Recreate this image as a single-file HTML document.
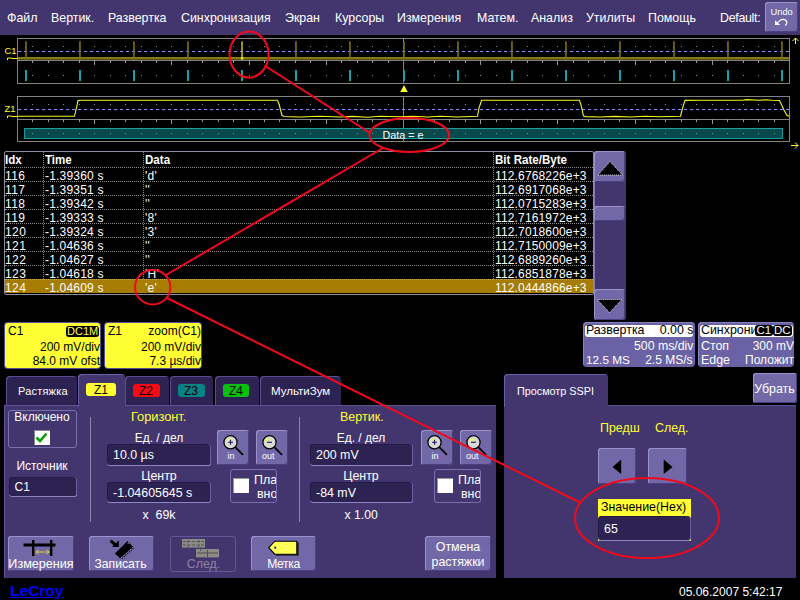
<!DOCTYPE html>
<html><head><meta charset="utf-8"><title>LeCroy</title>
<style>
html,body{margin:0;padding:0;background:#000;}
body{width:800px;height:600px;position:relative;overflow:hidden;font-family:"Liberation Sans",sans-serif;color:#fff;font-size:12.4px;}
.abs{position:absolute;}
.t{position:absolute;white-space:pre;line-height:14px;}
#menu{position:absolute;left:0;top:0;width:800px;height:35px;background:#43366f;}
#menu .t{top:11px;font-size:12.4px;}
.btn{position:absolute;background:#7268a8;border-radius:3px;box-shadow:inset 1px 1px 0 #9a92cc,inset -1px -1px 0 #4a3f80;}
.fld{position:absolute;background:#2d2353;border-radius:3px;box-shadow:inset 0 -1px 0 #8f86c4,inset -1px 0 0 #6a60a0,inset 1px 1px 0 #241b45;}
.pan{position:absolute;background:#43366f;}
.tab{position:absolute;background:#2d2353;border-radius:4px 4px 0 0;box-shadow:inset 1px 1px 0 #5a4e90;}
.y{color:#ffff33;}

#tbl .th{position:absolute;top:0;height:15px;line-height:16px;font-weight:bold;font-size:13px;white-space:pre;transform:scaleX(0.89);transform-origin:0 0;}
#tbl .tr{position:absolute;left:0;width:588px;height:14px;border-top:1px dotted #8a8a8a;box-sizing:border-box;font-size:12px;line-height:17px;white-space:pre;}
#tbl .tr.sel{background:#a67c02;border-top-color:#c8a848;}
#tbl .tr span{position:absolute;top:0;}
#tbl .c1{left:0px;letter-spacing:0.4px}
#tbl .c2{left:40px;letter-spacing:0.2px}
#tbl .c3{left:140px;letter-spacing:0.3px}
#tbl .c4{left:490px;letter-spacing:0.15px}
#tbl .vs{position:absolute;top:0;height:127px;width:0;border-left:1px dotted #8a8a8a;}

.desc{position:absolute;background:#ffff33;border-radius:3px;color:#000;overflow:hidden;box-shadow:0 0 0 1px #55509a;}
.desc .t{font-size:12px;}
.badge{background:#000;color:#ffff33;border-radius:3px;padding:0 1px;line-height:11px;font-size:11px!important;letter-spacing:-0.3px}
.tb{position:absolute;background:#6a62a4;border-radius:4px;overflow:hidden;box-shadow:inset 1px 1px 0 #8880bc;}
.tb .t{font-size:12px;}
.tb .ws{position:absolute;left:1.5px;top:2.5px;right:1.5px;height:12.5px;background:#fff;border-radius:3px}
.tb .k{color:#000}
.badge2{background:#000;color:#fff;border-radius:3px;padding:0 1.5px;line-height:11px;font-size:11.5px!important;}
.pill{position:absolute;top:8px;width:27px;height:13px;border-radius:3px;color:#000;font-size:12px;line-height:15px;text-align:center;}
.obox{position:absolute;box-sizing:border-box;border:1px solid #7a70b0;border-radius:3px;}
.c{text-align:center;}
</style></head><body>
<div id="menu">
<span class="t" style="left:7px">Файл</span>
<span class="t" style="left:51px">Вертик.</span>
<span class="t" style="left:108px">Развертка</span>
<span class="t" style="left:181px">Синхронизация</span>
<span class="t" style="left:285px">Экран</span>
<span class="t" style="left:335px">Курсоры</span>
<span class="t" style="left:397px">Измерения</span>
<span class="t" style="left:477px">Матем.</span>
<span class="t" style="left:531px">Анализ</span>
<span class="t" style="left:586px">Утилиты</span>
<span class="t" style="left:648px">Помощь</span>
<span class="t" style="left:720px;letter-spacing:-0.3px">Default:</span>
<div class="btn" style="left:765px;top:2px;width:33px;height:30px"></div>
<span class="t" style="left:770.5px;top:7px;font-size:9.3px;line-height:11px">Undo</span>
</div>
<!--WAVE-S--><svg class="abs" style="left:0;top:0" width="800" height="160" viewBox="0 0 800 160">
<rect x="17.5" y="38.5" width="772.0" height="45.0" fill="none" stroke="#828282" stroke-width="1"/>
<line x1="17.5" y1="60.5" x2="789.5" y2="60.5" stroke="#828282" stroke-width="1"/>
<line x1="403.5" y1="38.5" x2="403.5" y2="83.5" stroke="#828282" stroke-width="1"/>
<path d="M32.5 60.0v3 M48.5 60.0v3 M63.5 60.0v3 M79.5 60.0v3 M94.5 60.0v5 M110.5 60.0v3 M125.5 60.0v3 M141.5 60.0v3 M156.5 60.0v3 M171.5 60.0v5 M187.5 60.0v3 M202.5 60.0v3 M218.5 60.0v3 M233.5 60.0v3 M249.5 60.0v5 M264.5 60.0v3 M279.5 60.0v3 M295.5 60.0v3 M310.5 60.0v3 M326.5 60.0v5 M341.5 60.0v3 M357.5 60.0v3 M372.5 60.0v3 M388.5 60.0v3 M418.5 60.0v3 M434.5 60.0v3 M449.5 60.0v3 M465.5 60.0v3 M480.5 60.0v5 M496.5 60.0v3 M511.5 60.0v3 M527.5 60.0v3 M542.5 60.0v3 M557.5 60.0v5 M573.5 60.0v3 M588.5 60.0v3 M604.5 60.0v3 M619.5 60.0v3 M635.5 60.0v5 M650.5 60.0v3 M665.5 60.0v3 M681.5 60.0v3 M696.5 60.0v3 M712.5 60.0v5 M727.5 60.0v3 M743.5 60.0v3 M758.5 60.0v3 M774.5 60.0v3" stroke="#9a9a9a" stroke-width="1" fill="none"/>
<g fill="#909090"><rect x="32" y="46" width="1" height="1"/><rect x="48" y="46" width="1" height="1"/><rect x="63" y="46" width="1" height="1"/><rect x="79" y="46" width="1" height="1"/><rect x="94" y="46" width="1" height="1"/><rect x="110" y="46" width="1" height="1"/><rect x="125" y="46" width="1" height="1"/><rect x="141" y="46" width="1" height="1"/><rect x="156" y="46" width="1" height="1"/><rect x="171" y="46" width="1" height="1"/><rect x="187" y="46" width="1" height="1"/><rect x="202" y="46" width="1" height="1"/><rect x="218" y="46" width="1" height="1"/><rect x="233" y="46" width="1" height="1"/><rect x="249" y="46" width="1" height="1"/><rect x="264" y="46" width="1" height="1"/><rect x="279" y="46" width="1" height="1"/><rect x="295" y="46" width="1" height="1"/><rect x="310" y="46" width="1" height="1"/><rect x="326" y="46" width="1" height="1"/><rect x="341" y="46" width="1" height="1"/><rect x="357" y="46" width="1" height="1"/><rect x="372" y="46" width="1" height="1"/><rect x="388" y="46" width="1" height="1"/><rect x="403" y="46" width="1" height="1"/><rect x="418" y="46" width="1" height="1"/><rect x="434" y="46" width="1" height="1"/><rect x="449" y="46" width="1" height="1"/><rect x="465" y="46" width="1" height="1"/><rect x="480" y="46" width="1" height="1"/><rect x="496" y="46" width="1" height="1"/><rect x="511" y="46" width="1" height="1"/><rect x="527" y="46" width="1" height="1"/><rect x="542" y="46" width="1" height="1"/><rect x="557" y="46" width="1" height="1"/><rect x="573" y="46" width="1" height="1"/><rect x="588" y="46" width="1" height="1"/><rect x="604" y="46" width="1" height="1"/><rect x="619" y="46" width="1" height="1"/><rect x="635" y="46" width="1" height="1"/><rect x="650" y="46" width="1" height="1"/><rect x="665" y="46" width="1" height="1"/><rect x="681" y="46" width="1" height="1"/><rect x="696" y="46" width="1" height="1"/><rect x="712" y="46" width="1" height="1"/><rect x="727" y="46" width="1" height="1"/><rect x="743" y="46" width="1" height="1"/><rect x="758" y="46" width="1" height="1"/><rect x="774" y="46" width="1" height="1"/><rect x="32" y="75" width="1" height="1"/><rect x="48" y="75" width="1" height="1"/><rect x="63" y="75" width="1" height="1"/><rect x="79" y="75" width="1" height="1"/><rect x="94" y="75" width="1" height="1"/><rect x="110" y="75" width="1" height="1"/><rect x="125" y="75" width="1" height="1"/><rect x="141" y="75" width="1" height="1"/><rect x="156" y="75" width="1" height="1"/><rect x="171" y="75" width="1" height="1"/><rect x="187" y="75" width="1" height="1"/><rect x="202" y="75" width="1" height="1"/><rect x="218" y="75" width="1" height="1"/><rect x="233" y="75" width="1" height="1"/><rect x="249" y="75" width="1" height="1"/><rect x="264" y="75" width="1" height="1"/><rect x="279" y="75" width="1" height="1"/><rect x="295" y="75" width="1" height="1"/><rect x="310" y="75" width="1" height="1"/><rect x="326" y="75" width="1" height="1"/><rect x="341" y="75" width="1" height="1"/><rect x="357" y="75" width="1" height="1"/><rect x="372" y="75" width="1" height="1"/><rect x="388" y="75" width="1" height="1"/><rect x="403" y="75" width="1" height="1"/><rect x="418" y="75" width="1" height="1"/><rect x="434" y="75" width="1" height="1"/><rect x="449" y="75" width="1" height="1"/><rect x="465" y="75" width="1" height="1"/><rect x="480" y="75" width="1" height="1"/><rect x="496" y="75" width="1" height="1"/><rect x="511" y="75" width="1" height="1"/><rect x="527" y="75" width="1" height="1"/><rect x="542" y="75" width="1" height="1"/><rect x="557" y="75" width="1" height="1"/><rect x="573" y="75" width="1" height="1"/><rect x="588" y="75" width="1" height="1"/><rect x="604" y="75" width="1" height="1"/><rect x="619" y="75" width="1" height="1"/><rect x="635" y="75" width="1" height="1"/><rect x="650" y="75" width="1" height="1"/><rect x="665" y="75" width="1" height="1"/><rect x="681" y="75" width="1" height="1"/><rect x="696" y="75" width="1" height="1"/><rect x="712" y="75" width="1" height="1"/><rect x="727" y="75" width="1" height="1"/><rect x="743" y="75" width="1" height="1"/><rect x="758" y="75" width="1" height="1"/><rect x="774" y="75" width="1" height="1"/></g>
<rect x="17.5" y="96.5" width="772.0" height="45.0" fill="none" stroke="#828282" stroke-width="1"/>
<line x1="17.5" y1="119.5" x2="789.5" y2="119.5" stroke="#828282" stroke-width="1"/>
<line x1="403.5" y1="96.5" x2="403.5" y2="141.5" stroke="#828282" stroke-width="1"/>
<path d="M32.5 119.0v3 M48.5 119.0v3 M63.5 119.0v3 M79.5 119.0v3 M94.5 119.0v5 M110.5 119.0v3 M125.5 119.0v3 M141.5 119.0v3 M156.5 119.0v3 M171.5 119.0v5 M187.5 119.0v3 M202.5 119.0v3 M218.5 119.0v3 M233.5 119.0v3 M249.5 119.0v5 M264.5 119.0v3 M279.5 119.0v3 M295.5 119.0v3 M310.5 119.0v3 M326.5 119.0v5 M341.5 119.0v3 M357.5 119.0v3 M372.5 119.0v3 M388.5 119.0v3 M418.5 119.0v3 M434.5 119.0v3 M449.5 119.0v3 M465.5 119.0v3 M480.5 119.0v5 M496.5 119.0v3 M511.5 119.0v3 M527.5 119.0v3 M542.5 119.0v3 M557.5 119.0v5 M573.5 119.0v3 M588.5 119.0v3 M604.5 119.0v3 M619.5 119.0v3 M635.5 119.0v5 M650.5 119.0v3 M665.5 119.0v3 M681.5 119.0v3 M696.5 119.0v3 M712.5 119.0v5 M727.5 119.0v3 M743.5 119.0v3 M758.5 119.0v3 M774.5 119.0v3" stroke="#9a9a9a" stroke-width="1" fill="none"/>
<g fill="#909090"><rect x="32" y="104" width="1" height="1"/><rect x="48" y="104" width="1" height="1"/><rect x="63" y="104" width="1" height="1"/><rect x="79" y="104" width="1" height="1"/><rect x="94" y="104" width="1" height="1"/><rect x="110" y="104" width="1" height="1"/><rect x="125" y="104" width="1" height="1"/><rect x="141" y="104" width="1" height="1"/><rect x="156" y="104" width="1" height="1"/><rect x="171" y="104" width="1" height="1"/><rect x="187" y="104" width="1" height="1"/><rect x="202" y="104" width="1" height="1"/><rect x="218" y="104" width="1" height="1"/><rect x="233" y="104" width="1" height="1"/><rect x="249" y="104" width="1" height="1"/><rect x="264" y="104" width="1" height="1"/><rect x="279" y="104" width="1" height="1"/><rect x="295" y="104" width="1" height="1"/><rect x="310" y="104" width="1" height="1"/><rect x="326" y="104" width="1" height="1"/><rect x="341" y="104" width="1" height="1"/><rect x="357" y="104" width="1" height="1"/><rect x="372" y="104" width="1" height="1"/><rect x="388" y="104" width="1" height="1"/><rect x="403" y="104" width="1" height="1"/><rect x="418" y="104" width="1" height="1"/><rect x="434" y="104" width="1" height="1"/><rect x="449" y="104" width="1" height="1"/><rect x="465" y="104" width="1" height="1"/><rect x="480" y="104" width="1" height="1"/><rect x="496" y="104" width="1" height="1"/><rect x="511" y="104" width="1" height="1"/><rect x="527" y="104" width="1" height="1"/><rect x="542" y="104" width="1" height="1"/><rect x="557" y="104" width="1" height="1"/><rect x="573" y="104" width="1" height="1"/><rect x="588" y="104" width="1" height="1"/><rect x="604" y="104" width="1" height="1"/><rect x="619" y="104" width="1" height="1"/><rect x="635" y="104" width="1" height="1"/><rect x="650" y="104" width="1" height="1"/><rect x="665" y="104" width="1" height="1"/><rect x="681" y="104" width="1" height="1"/><rect x="696" y="104" width="1" height="1"/><rect x="712" y="104" width="1" height="1"/><rect x="727" y="104" width="1" height="1"/><rect x="743" y="104" width="1" height="1"/><rect x="758" y="104" width="1" height="1"/><rect x="774" y="104" width="1" height="1"/><rect x="32" y="133" width="1" height="1"/><rect x="48" y="133" width="1" height="1"/><rect x="63" y="133" width="1" height="1"/><rect x="79" y="133" width="1" height="1"/><rect x="94" y="133" width="1" height="1"/><rect x="110" y="133" width="1" height="1"/><rect x="125" y="133" width="1" height="1"/><rect x="141" y="133" width="1" height="1"/><rect x="156" y="133" width="1" height="1"/><rect x="171" y="133" width="1" height="1"/><rect x="187" y="133" width="1" height="1"/><rect x="202" y="133" width="1" height="1"/><rect x="218" y="133" width="1" height="1"/><rect x="233" y="133" width="1" height="1"/><rect x="249" y="133" width="1" height="1"/><rect x="264" y="133" width="1" height="1"/><rect x="279" y="133" width="1" height="1"/><rect x="295" y="133" width="1" height="1"/><rect x="310" y="133" width="1" height="1"/><rect x="326" y="133" width="1" height="1"/><rect x="341" y="133" width="1" height="1"/><rect x="357" y="133" width="1" height="1"/><rect x="372" y="133" width="1" height="1"/><rect x="388" y="133" width="1" height="1"/><rect x="403" y="133" width="1" height="1"/><rect x="418" y="133" width="1" height="1"/><rect x="434" y="133" width="1" height="1"/><rect x="449" y="133" width="1" height="1"/><rect x="465" y="133" width="1" height="1"/><rect x="480" y="133" width="1" height="1"/><rect x="496" y="133" width="1" height="1"/><rect x="511" y="133" width="1" height="1"/><rect x="527" y="133" width="1" height="1"/><rect x="542" y="133" width="1" height="1"/><rect x="557" y="133" width="1" height="1"/><rect x="573" y="133" width="1" height="1"/><rect x="588" y="133" width="1" height="1"/><rect x="604" y="133" width="1" height="1"/><rect x="619" y="133" width="1" height="1"/><rect x="635" y="133" width="1" height="1"/><rect x="650" y="133" width="1" height="1"/><rect x="665" y="133" width="1" height="1"/><rect x="681" y="133" width="1" height="1"/><rect x="696" y="133" width="1" height="1"/><rect x="712" y="133" width="1" height="1"/><rect x="727" y="133" width="1" height="1"/><rect x="743" y="133" width="1" height="1"/><rect x="758" y="133" width="1" height="1"/><rect x="774" y="133" width="1" height="1"/></g>
<line x1="18.0" y1="51.5" x2="789.5" y2="51.5" stroke="#8c8cff" stroke-width="1" stroke-dasharray="3.2 2.8"/>
<line x1="18.0" y1="109.5" x2="789.5" y2="109.5" stroke="#8c8cff" stroke-width="1" stroke-dasharray="3.2 2.8"/>
<rect x="17.5" y="57" width="772.0" height="2.6" fill="#847c10"/>
<g fill="#756e10"><rect x="25.1" y="41.3" width="1.7" height="18.5" /><rect x="79.1" y="41.3" width="1.7" height="18.5" /><rect x="133.1" y="41.3" width="1.7" height="18.5" /><rect x="187.1" y="41.3" width="1.7" height="18.5" /><rect x="295.1" y="41.3" width="1.7" height="18.5" /><rect x="349.1" y="41.3" width="1.7" height="18.5" /><rect x="403.1" y="41.3" width="1.7" height="18.5" /><rect x="457.1" y="41.3" width="1.7" height="18.5" /><rect x="511.1" y="41.3" width="1.7" height="18.5" /><rect x="565.1" y="41.3" width="1.7" height="18.5" /><rect x="619.1" y="41.3" width="1.7" height="18.5" /><rect x="673.1" y="41.3" width="1.7" height="18.5" /><rect x="727.1" y="41.3" width="1.7" height="18.5" /><rect x="781.1" y="41.3" width="1.7" height="18.5" /></g>
<rect x="241.1" y="41.3" width="1.8" height="18" fill="#aaa21a"/>
<rect x="240.8" y="57.3" width="2.6" height="2.2" fill="#f0e820"/>
<g fill="#12a4ac"><rect x="25" y="70" width="2" height="11" /><rect x="79" y="70" width="2" height="11" /><rect x="133" y="70" width="2" height="11" /><rect x="187" y="70" width="2" height="11" /><rect x="241" y="70" width="2" height="11" /><rect x="295" y="70" width="2" height="11" /><rect x="349" y="70" width="2" height="11" /><rect x="403" y="70" width="2" height="11" /><rect x="457" y="70" width="2" height="11" /><rect x="511" y="70" width="2" height="11" /><rect x="565" y="70" width="2" height="11" /><rect x="619" y="70" width="2" height="11" /><rect x="673" y="70" width="2" height="11" /><rect x="727" y="70" width="2" height="11" /><rect x="781" y="70" width="2" height="11" /></g>
<rect x="24.5" y="128.5" width="758" height="10" fill="#084a4c" stroke="#169c9e" stroke-width="1"/>
<g fill="#6f9a9a"><rect x="32" y="133" width="1" height="1"/><rect x="48" y="133" width="1" height="1"/><rect x="63" y="133" width="1" height="1"/><rect x="79" y="133" width="1" height="1"/><rect x="94" y="133" width="1" height="1"/><rect x="110" y="133" width="1" height="1"/><rect x="125" y="133" width="1" height="1"/><rect x="141" y="133" width="1" height="1"/><rect x="156" y="133" width="1" height="1"/><rect x="171" y="133" width="1" height="1"/><rect x="187" y="133" width="1" height="1"/><rect x="202" y="133" width="1" height="1"/><rect x="218" y="133" width="1" height="1"/><rect x="233" y="133" width="1" height="1"/><rect x="249" y="133" width="1" height="1"/><rect x="264" y="133" width="1" height="1"/><rect x="279" y="133" width="1" height="1"/><rect x="295" y="133" width="1" height="1"/><rect x="310" y="133" width="1" height="1"/><rect x="326" y="133" width="1" height="1"/><rect x="341" y="133" width="1" height="1"/><rect x="357" y="133" width="1" height="1"/><rect x="372" y="133" width="1" height="1"/><rect x="388" y="133" width="1" height="1"/><rect x="403" y="133" width="1" height="1"/><rect x="418" y="133" width="1" height="1"/><rect x="434" y="133" width="1" height="1"/><rect x="449" y="133" width="1" height="1"/><rect x="465" y="133" width="1" height="1"/><rect x="480" y="133" width="1" height="1"/><rect x="496" y="133" width="1" height="1"/><rect x="511" y="133" width="1" height="1"/><rect x="527" y="133" width="1" height="1"/><rect x="542" y="133" width="1" height="1"/><rect x="557" y="133" width="1" height="1"/><rect x="573" y="133" width="1" height="1"/><rect x="588" y="133" width="1" height="1"/><rect x="604" y="133" width="1" height="1"/><rect x="619" y="133" width="1" height="1"/><rect x="635" y="133" width="1" height="1"/><rect x="650" y="133" width="1" height="1"/><rect x="665" y="133" width="1" height="1"/><rect x="681" y="133" width="1" height="1"/><rect x="696" y="133" width="1" height="1"/><rect x="712" y="133" width="1" height="1"/><rect x="727" y="133" width="1" height="1"/><rect x="743" y="133" width="1" height="1"/><rect x="758" y="133" width="1" height="1"/><rect x="774" y="133" width="1" height="1"/></g>
<polyline fill="none" stroke="#f4f41c" stroke-width="1.1" points="17.5,116.3 74.5,116.3 76,110 78,100.6 80,100.3 277.5,100.3 279,104 282,115.5 284,116.5 300,117 320,116.3 340,117 352,116.4 368,117.2 380,116.3 400,116.8 413,116.2 428,117 440,116.3 458,117 470,116.5 477.5,116.3 479,108 481.5,100.4 483,100.2 579.5,100.2 581,105 583.5,116 586,116.6 600,117 615,116.4 630,117 645,116.3 660,116.8 680.5,116.2 682,110 685,100.4 700,100.2 743,100.2 746,99.6 760,100.2 766,99.7 772,100.3 779.5,100.5 784,110 787,115.5 789.5,116.3"/>
<polygon points="404,85 400.3,92 407.7,92" fill="#ffff30"/>
<text x="4.5" y="54" font-family="Liberation Sans, sans-serif" font-size="9.5" fill="#ffff30">C1</text>
<text x="4.5" y="112" font-family="Liberation Sans, sans-serif" font-size="9.5" fill="#ffff30">Z1</text>
<path d="M7.5 60v-2h3.5l1 0.5h5.5" stroke="#ffff30" fill="none" stroke-width="1"/>
<path d="M7.5 118v-2h3.5l1 0.5h5.5" stroke="#ffff30" fill="none" stroke-width="1"/>
<path d="M795.5 44v-6m-3 3l3-3l3 3" stroke="#ffff30" fill="none" stroke-width="1"/>
<path d="M791 145.5h7m-3-3l3 3l-3 3" stroke="#ffff30" fill="none" stroke-width="1"/>
<text x="382.5" y="138.6" font-family="Liberation Sans, sans-serif" font-size="10.8" fill="#fff">Data = e</text>
</svg><!--WAVE-E-->
<!--TABLE-S--><div id="tbl" class="abs" style="left:4px;top:151px;width:588px;height:142px;border:1px solid #8c8c9c;border-radius:2px;box-sizing:content-box;overflow:hidden">
<div class="th" style="left:0px">Idx</div><div class="th" style="left:40px">Time</div><div class="th" style="left:139.5px">Data</div><div class="th" style="left:490px">Bit Rate/Byte</div>
<div class="tr" style="top:15px"><span class="c1">116</span><span class="c2">-1.39360 s</span><span class="c3">'d'</span><span class="c4">112.6768226e+3</span></div>
<div class="tr" style="top:29px"><span class="c1">117</span><span class="c2">-1.39351 s</span><span class="c3">''</span><span class="c4">112.6917068e+3</span></div>
<div class="tr" style="top:43px"><span class="c1">118</span><span class="c2">-1.39342 s</span><span class="c3">''</span><span class="c4">112.0715283e+3</span></div>
<div class="tr" style="top:57px"><span class="c1">119</span><span class="c2">-1.39333 s</span><span class="c3">'8'</span><span class="c4">112.7161972e+3</span></div>
<div class="tr" style="top:71px"><span class="c1">120</span><span class="c2">-1.39324 s</span><span class="c3">'3'</span><span class="c4">112.7018600e+3</span></div>
<div class="tr" style="top:85px"><span class="c1">121</span><span class="c2">-1.04636 s</span><span class="c3">''</span><span class="c4">112.7150009e+3</span></div>
<div class="tr" style="top:99px"><span class="c1">122</span><span class="c2">-1.04627 s</span><span class="c3">''</span><span class="c4">112.6889260e+3</span></div>
<div class="tr" style="top:113px"><span class="c1">123</span><span class="c2">-1.04618 s</span><span class="c3">'H'</span><span class="c4">112.6851878e+3</span></div>
<div class="tr sel" style="top:127px"><span class="c1">124</span><span class="c2">-1.04609 s</span><span class="c3">'e'</span><span class="c4">112.0444866e+3</span></div>
<div class="vs" style="left:38px"></div>
<div class="vs" style="left:138px"></div>
<div class="vs" style="left:488px"></div>
</div>
<div class="abs" style="left:594px;top:151px;width:31.5px;height:169px;background:#43366f;border-radius:3px;box-shadow:inset 1px 0 0 #8078b8"></div>
<div class="btn" style="left:594px;top:151px;width:31px;height:31px"></div>
<div class="btn" style="left:594px;top:206px;width:31px;height:15px"></div>
<div class="btn" style="left:594px;top:289px;width:31px;height:31px"></div>
<svg class="abs" style="left:595px;top:151px" width="30" height="168"><polygon points="15,10.5 3,24 27.5,24" fill="#000" stroke="#e8e8e8" stroke-width="0.9" stroke-dasharray="1 1"/><polygon points="14.5,161.5 2.2,148.5 27,148.5" fill="#000" stroke="#e8e8e8" stroke-width="0.9" stroke-dasharray="1 1"/></svg><!--TABLE-E-->
<!--DESC-S--><!-- descriptor boxes -->
<div class="desc" style="left:5px;top:323px;width:95px;height:45px">
<span class="t" style="left:3px;top:1px">C1</span>
<span class="t badge" style="left:61px;top:3px;letter-spacing:0">DC1M</span>
<span class="t r" style="right:0;top:17px">200 mV/div</span>
<span class="t r" style="right:0;top:31px">84.0 mV ofst</span>
</div>
<div class="desc" style="left:105px;top:323px;width:96px;height:45px">
<span class="t" style="left:3px;top:1px">Z1</span>
<span class="t r" style="right:0;top:1px">zoom(C1)</span>
<span class="t r" style="right:0;top:17px">200 mV/div</span>
<span class="t r" style="right:0;top:31px">7.3 µs/div</span>
</div>
<!-- timebase / trigger -->
<div class="tb" style="left:583px;top:322px;width:111.5px;height:45px">
<div class="ws"></div>
<span class="t k" style="left:3px;top:1px;font-size:12.4px">Развертка</span>
<span class="t k" style="right:1px;top:1px;font-size:12.4px">0.00 s</span>
<span class="t" style="right:1px;top:17px;font-size:12.3px">500 ms/div</span>
<span class="t" style="left:3px;top:31px;font-size:11.8px">12.5 MS</span>
<span class="t" style="right:2px;top:31px">2.5 MS/s</span>
</div>
<div class="tb" style="left:698px;top:322px;width:96px;height:45px">
<div class="ws"></div>
<span class="t k" style="left:3px;top:1px;font-size:12.4px">Синхрони</span>
<span class="t badge2" style="left:57px;top:3px">C1</span>
<span class="t badge2" style="left:74.5px;top:3px">DC</span>
<span class="t" style="left:3px;top:17px;font-size:12.4px">Стоп</span>
<span class="t" style="right:0;top:17px">300 mV</span>
<span class="t" style="left:3px;top:31px;font-size:12.4px">Edge</span>
<span class="t" style="right:0;top:31px">Положит</span>
</div>
<!-- left panel -->
<div class="tab" style="left:6px;top:376px;width:71px;height:30px"><span class="t" style="left:12px;top:8px;font-size:11px;letter-spacing:0.2px">Растяжка</span></div>
<div class="tab" style="left:124.5px;top:376px;width:44px;height:30px"><span class="pill" style="left:8px;background:#f80a14">Z2</span></div>
<div class="tab" style="left:169.5px;top:376px;width:43.5px;height:30px"><span class="pill" style="left:8px;background:#088284">Z3</span></div>
<div class="tab" style="left:214.5px;top:376px;width:44.5px;height:30px"><span class="pill" style="left:8.5px;width:26px;background:#08c010">Z4</span></div>
<div class="tab" style="left:260px;top:376px;width:81px;height:30px"><span class="t" style="left:11px;top:8px;font-size:11.5px">МультиЗум</span></div>
<div class="pan" style="left:4px;top:405px;width:492px;height:173px;box-shadow:inset 1px 1px 0 #5f5396"></div>
<div class="pan" style="left:78px;top:374px;width:47px;height:33px;border-radius:4px 4px 0 0;box-shadow:inset 1px 1px 0 #6a5ea4"><span class="pill" style="left:8px;top:9px;width:30px;background:#ffff33">Z1</span></div>
<div class="obox" style="left:8px;top:410px;width:69px;height:38px"></div>
<span class="t c" style="left:8px;width:68px;top:410px;font-size:12px">Включено</span>
<div class="abs" style="left:34px;top:429.5px;width:15.5px;height:15px;background:#fff;box-shadow:inset 1px 1px 0 #888"></div>
<svg class="abs" style="left:34px;top:430px" width="15" height="14"><path d="M2.5 7.5l3.5 3.5l6.5-7.5" stroke="#0aa00a" stroke-width="2.6" fill="none"/></svg>
<span class="t c" style="left:8px;width:68px;top:458.5px;font-size:12px">Источник</span>
<div class="fld" style="left:8.5px;top:477px;width:68.5px;height:19.5px"><span class="t" style="left:6px;top:3px;font-size:12px">C1</span></div>
<div class="abs" style="left:90px;top:417px;width:1px;height:105px;background:#8a84a6"></div>
<div class="abs" style="left:299px;top:417px;width:1px;height:105px;background:#8a84a6"></div>
<!-- horiz -->
<span class="t y" style="left:131px;top:410px;font-size:12.8px">Горизонт.</span>
<span class="t c" style="left:107px;width:104px;top:431px;font-size:12px">Ед. / дел</span>
<div class="fld" style="left:107px;top:444px;width:104px;height:22px"><span class="t" style="left:6px;top:4px">10.0 µs</span></div>
<span class="t c" style="left:107px;width:104px;top:469px">Центр</span>
<div class="fld" style="left:107px;top:482px;width:104px;height:21px"><span class="t" style="left:6px;top:4px">-1.04605645 s</span></div>
<span class="t" style="left:142.5px;top:508px">x  69k</span>
<div class="btn" style="left:217px;top:430px;width:32px;height:35px"></div>
<div class="btn" style="left:256px;top:430px;width:32px;height:35px"></div>
<div class="obox" style="left:230px;top:469px;width:47px;height:34px;overflow:hidden"><span class="t" style="left:23px;top:3px">Пла</span><span class="t" style="left:26px;top:17px">вно</span></div>
<div class="abs" style="left:233px;top:478px;width:16px;height:15px;background:#fff;box-shadow:inset 1px 1px 0 #999"></div>
<!-- vert -->
<span class="t y" style="left:340px;top:410px;font-size:12.5px">Вертик.</span>
<span class="t c" style="left:310px;width:102px;top:431px;font-size:12px">Ед. / дел</span>
<div class="fld" style="left:310px;top:444px;width:103px;height:22px"><span class="t" style="left:6px;top:4px">200 mV</span></div>
<span class="t c" style="left:310px;width:102px;top:469px">Центр</span>
<div class="fld" style="left:310px;top:482px;width:103px;height:21px"><span class="t" style="left:6px;top:4px">-84 mV</span></div>
<span class="t" style="left:344.5px;top:508px;font-size:12.2px">x 1.00</span>
<div class="btn" style="left:421px;top:430px;width:32px;height:35px"></div>
<div class="btn" style="left:460px;top:430px;width:32px;height:35px"></div>
<div class="obox" style="left:434px;top:469px;width:47px;height:34px;overflow:hidden"><span class="t" style="left:23px;top:3px">Пла</span><span class="t" style="left:26px;top:17px">вно</span></div>
<div class="abs" style="left:437px;top:478px;width:16px;height:15px;background:#fff;box-shadow:inset 1px 1px 0 #999"></div>
<!-- bottom buttons -->
<div class="btn" style="left:8px;top:536px;width:66px;height:35px"><span class="t c" style="left:-2px;width:70px;top:21px;font-size:12.6px">Измерения</span></div>
<div class="btn" style="left:89px;top:536px;width:65px;height:35px"><span class="t c" style="left:-1px;width:65px;top:21px;font-size:12.2px">Записать</span></div>
<div class="obox" style="left:170px;top:536px;width:66px;height:35.5px;border-color:#62579a"><span class="t c" style="left:0;width:65px;top:20px;color:#8884a8">След.</span></div>
<div class="btn" style="left:251px;top:536px;width:65px;height:35px"><span class="t c" style="left:0;width:65px;top:21px;font-size:12.2px;letter-spacing:-0.4px">Метка</span></div>
<div class="btn" style="left:425px;top:536px;width:66px;height:35px"><span class="t c" style="left:0;width:66px;top:4px">Отмена</span><span class="t c" style="left:0;width:66px;top:19px">растяжки</span></div>
<!-- right panel -->
<div class="pan" style="left:504px;top:405px;width:291.5px;height:173px;box-shadow:inset 0 1px 0 #5f5396"></div>
<div class="pan" style="left:504px;top:374px;width:104px;height:33px;border-radius:4px 4px 0 0;box-shadow:inset 1px 1px 0 #6a5ea4"><span class="t" style="left:13px;top:10px;font-size:10.8px">Просмотр SSPI</span></div>
<div class="btn" style="left:752.5px;top:372.5px;width:44px;height:30px"><span class="t c" style="left:0;width:44px;top:9px">Убрать</span></div>
<span class="t y" style="left:600px;top:421px">Предш</span>
<span class="t y" style="left:655px;top:421px">След.</span>
<div class="btn" style="left:598px;top:448px;width:38px;height:36px"></div>
<div class="btn" style="left:648px;top:448px;width:39px;height:36px"></div>
<svg class="abs" style="left:598px;top:448px" width="90" height="36"><polygon points="14.5,19 23.2,11.5 23.2,26" fill="#000"/><polygon points="74.5,19 65.7,11.5 65.7,26" fill="#000"/></svg>
<div class="abs" style="left:598px;top:499px;width:93px;height:42px;background:#ffff33"></div>
<span class="t" style="left:601px;top:500px;color:#000">Значение(Hex)</span>
<div class="fld" style="left:598px;top:516px;width:93px;height:25px;border-radius:4px"><span class="t" style="left:6px;top:6px">65</span></div>
<!-- footer -->
<span class="t" style="left:10px;top:582px;font-size:15.5px;font-weight:bold;line-height:18px;color:#0000ff;text-decoration:underline">LeCroy</span>
<span class="t" style="left:679px;top:584.5px;font-size:12px">05.06.2007 5:42:17</span>
<!--DESC-E-->
<!--LEFTPANEL-->
<!--RIGHTPANEL-->
<!--ICONS-S--><svg class="abs" style="left:0;top:0;pointer-events:none" width="800" height="600" viewBox="0 0 800 600">
<!-- undo arrow -->
<path d="M775 20.2v4.8h5.2z" fill="#fff"/><path d="M777.5 22.8l2.3-2.2q2.8-2.2 5.6-0.6q2.4 1.8 1 4.2l-1.2 1.4" stroke="#fff" stroke-width="1.1" fill="none"/>
<!-- magnifiers -->
<g transform="translate(230.5 442.3)"><line x1="5" y1="5" x2="12" y2="12" stroke="#000" stroke-width="1.8" stroke-linecap="round"/><circle cx="0" cy="0" r="6.6" fill="#d9d9d6" stroke="#000" stroke-width="1.3"/><path d="M-2.8 -1v-1.6h2.2" stroke="#ffff30" stroke-width="1.2" fill="none"/></g><path d="M228 442.3h5M230.5 439.8v5" stroke="#1a1a60" stroke-width="1.1"/>
<g transform="translate(269.5 442.3)"><line x1="5" y1="5" x2="12" y2="12" stroke="#000" stroke-width="1.8" stroke-linecap="round"/><circle cx="0" cy="0" r="6.6" fill="#d9d9d6" stroke="#000" stroke-width="1.3"/><path d="M-2.8 -1v-1.6h2.2" stroke="#ffff30" stroke-width="1.2" fill="none"/></g><path d="M267 442.3h5" stroke="#1a1a60" stroke-width="1.1"/>
<g transform="translate(434.5 442.3)"><line x1="5" y1="5" x2="12" y2="12" stroke="#000" stroke-width="1.8" stroke-linecap="round"/><circle cx="0" cy="0" r="6.6" fill="#d9d9d6" stroke="#000" stroke-width="1.3"/><path d="M-2.8 -1v-1.6h2.2" stroke="#ffff30" stroke-width="1.2" fill="none"/></g><path d="M432 442.3h5M434.5 439.8v5" stroke="#1a1a60" stroke-width="1.1"/>
<g transform="translate(473.5 442.3)"><line x1="5" y1="5" x2="12" y2="12" stroke="#000" stroke-width="1.8" stroke-linecap="round"/><circle cx="0" cy="0" r="6.6" fill="#d9d9d6" stroke="#000" stroke-width="1.3"/><path d="M-2.8 -1v-1.6h2.2" stroke="#ffff30" stroke-width="1.2" fill="none"/></g><path d="M471 442.3h5" stroke="#1a1a60" stroke-width="1.1"/>
<g font-family="Liberation Sans, sans-serif" font-size="9" fill="#fff" text-anchor="middle"><text x="231" y="458.8">in</text><text x="268.3" y="458.8">out</text><text x="435" y="458.8">in</text><text x="472.3" y="458.8">out</text></g>
<!-- measure icon -->
<path d="M23.5 545h32" stroke="#000" stroke-width="3"/><path d="M33.2 540v16M51.2 540v16" stroke="#000" stroke-width="2.4"/><path d="M36 552h13M38.5 549.8l-2.5 2.2l2.5 2.2M46.5 549.8l2.5 2.2l-2.5 2.2" stroke="#e8e020" stroke-width="0.9" fill="none"/>
<!-- chip icon -->
<path d="M110.6 540.7l5.5 5" stroke="#000" stroke-width="3"/><path d="M118.8 540.2v6.7h-6.7z" fill="#000"/>
<path d="M127.6 541l5.6 5.9l-13 11.5l-5.3-5z" fill="#000"/>
<path d="M133.4 548.2l-12.4 11" stroke="#000" stroke-width="1.6" stroke-dasharray="1.1 1.3"/>
<path d="M132.8 547.4l-12.4 11" stroke="#e8e8f0" stroke-width="0.6" stroke-dasharray="1.2 1.2"/>
<rect x="127.6" y="542.4" width="1.6" height="1.6" fill="#777"/>
<!-- next icon (disabled) -->
<rect x="182" y="539" width="23" height="8.6" fill="#8a8a86"/><path d="M183 541.5h21M183 545h21M188 540v7M199 540v7" stroke="#4a4a52" stroke-width="0.8" stroke-dasharray="3 1.5"/>
<rect x="196" y="549" width="23" height="8.4" fill="#8a8a86"/><path d="M197 553h21M207.5 550v7" stroke="#4a4a52" stroke-width="0.9"/><path d="M200.5 547.6v3" stroke="#4a4a52" stroke-width="1"/>
<!-- tag icon -->
<path d="M270.4 549l6-6.6h22.4v13.4h-22.4z" fill="#1a1a1a" opacity="0.85"/>
<path d="M268.8 547.7l6-6.5h22v13h-22z" fill="#ffff58" stroke="#000" stroke-width="1.1" stroke-linejoin="miter"/>
<circle cx="275.2" cy="547.7" r="1.1" fill="#202060"/>
</svg>
<!--ICONS-E-->
<!--OVERLAY-S--><svg class="abs" style="left:0;top:0;pointer-events:none" width="800" height="600" viewBox="0 0 800 600">
<g fill="none" stroke="#f00a1c" stroke-width="2">
<ellipse cx="249" cy="54.5" rx="19.5" ry="23"/>
<ellipse cx="409.2" cy="135" rx="39.8" ry="17"/>
<ellipse cx="152.7" cy="287.2" rx="17.7" ry="17.2"/>
<ellipse cx="647" cy="518" rx="72" ry="40"/>
<line x1="264.5" y1="65.5" x2="370" y2="133"/>
<line x1="383" y1="148" x2="166" y2="275"/>
<line x1="167" y1="298" x2="581" y2="503"/>
</g>
</svg>
<!--OVERLAY-E-->
</body></html>
